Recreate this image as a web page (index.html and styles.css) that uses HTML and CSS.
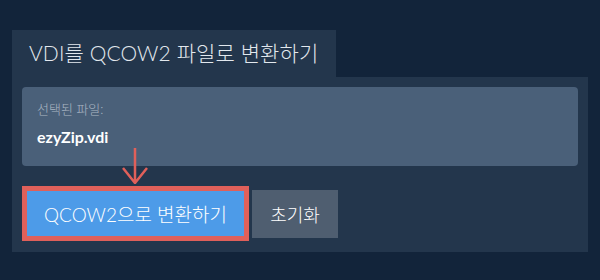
FILE: index.html
```html
<!DOCTYPE html>
<html lang="ko">
<head>
  <meta charset="UTF-8"/>
  <title>VDI를 QCOW2 파일로 변환하기</title>
  <link rel="stylesheet" href="styles.css">
</head>
<body>
  <div class="wrap">
    <div class="tab">VDI를 QCOW2 파일로 변환하기</div>
    <div class="panel">
      <div class="file-box">
        <div class="label">선택된 파일:</div>
        <div class="name">ezyZip.vdi</div>
      </div>
      <div class="actions">
        <button class="btn convert">QCOW2으로 변환하기</button>
        <button class="btn reset">초기화</button>
      </div>
      <!-- annotation arrow -->
      <svg class="arrow" width="28" height="36" viewBox="0 0 28 36">
        <path d="M13 0 V35 M1 20 L13 35 L25 20" fill="none" stroke="#e0605a" stroke-width="2.5"/>
      </svg>
    </div>
  </div>
</body>
</html>
```

FILE: styles.css
```css
* { box-sizing: border-box; margin: 0; padding: 0; }
body {
  background: #12243a;
  font-family: Lato, "Noto Sans CJK KR", sans-serif;
  color: #fff;
}
.wrap { padding: 30px 12px 0; }
.tab {
  display: inline-block;
  height: 47px; line-height: 46px;
  padding: 0 18px 0 17px;
  background: #23364c;
  color: #e2e8ee;
  font-size: 21px; font-weight: 300;
  letter-spacing: 0.1px;
}
.panel {
  position: relative;
  background: #23364c;
  padding: 10px 10px 11px;
}
.file-box {
  background: #4a6079;
  border-radius: 4px;
  height: 79px;
  padding: 13px 15px 0;
}
.label { font-size: 13px; color: #aab6c3; line-height: 18px; font-weight: 300; }
.name { font-size: 16px; font-weight: 700; margin-top: 8px; line-height: 21px; }
.actions { display: flex; align-items: center; margin-top: 20px; }
.btn {
  font-family: Lato, "Noto Sans CJK KR", sans-serif;
  color: #fff; border: none; cursor: pointer;
  font-weight: 300;
}
.convert {
  width: 227px; height: 55px;
  background: #4d9be8;
  border: 5px solid #e0605a;
  font-size: 19px;
}
.reset {
  margin-left: 3px;
  width: 86px; height: 48px;
  background: #4f5e70;
  font-size: 18px;
}
.arrow { position: absolute; left: 110px; top: 71px; }
```
